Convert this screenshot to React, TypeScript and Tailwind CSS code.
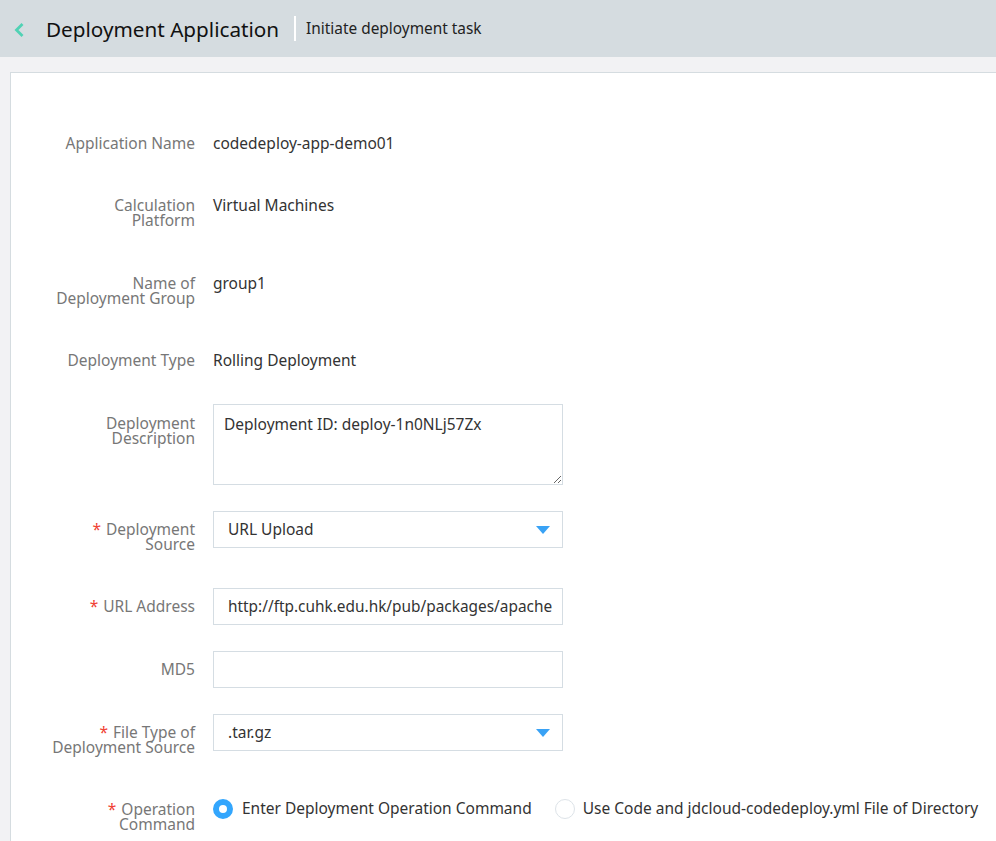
import React from "react";

const font = { fontFamily: '"Noto Sans", "Open Sans", sans-serif' };

function Label({ text, required }: { text: string[]; required?: boolean }) {
  return (
    <div className="w-[184px] shrink-0 text-right text-[15.5px] leading-[15px] text-[#777]">
      {text.map((t, i) => (
        <div key={i} className="h-[15px] whitespace-nowrap">
          {i === 0 && required ? <span className="mr-[5px] text-[#f04134]">*</span> : null}
          {t}
        </div>
      ))}
    </div>
  );
}

function Arrow() {
  return (
    <svg width="14" height="8" viewBox="0 0 14 8" className="absolute right-[12px] top-[14px]">
      <path d="M0 0 H14 L7 8 Z" fill="#39a2f5" />
    </svg>
  );
}

export default function App() {
  return (
    <div className="min-h-[841px] w-[996px] overflow-hidden bg-[#f2f2f4]" style={font}>
      <div className="flex h-[57px] items-center bg-[#d5dce0]">
        <svg width="12" height="16" viewBox="0 0 12 16" className="ml-[13px] mt-[2px]">
          <path d="M9.5 2 L3.5 8 L9.5 14" fill="none" stroke="#50d2b4" strokeWidth="2.8" />
        </svg>
        <div className="ml-[21px] text-[20.7px] leading-[30px] text-[#111]">Deployment Application</div>
        <div className="ml-[15px] h-[25px] w-[2px] bg-white" />
        <div className="ml-[10px] text-[15.4px] text-[#222]">Initiate deployment task</div>
      </div>
      <div className="ml-[10px] mt-[15px] min-h-[800px] border-l border-t border-[#d5dce0] bg-white pt-[63px]">
        <div className="flex h-[15px] gap-[18px]">
          <Label text={["Application Name"]} />
          <div className="text-[15.5px] leading-[15px] text-[#333]">codedeploy-app-demo01</div>
        </div>
        <div className="mt-[47px] flex h-[30px] gap-[18px]">
          <Label text={["Calculation", "Platform"]} />
          <div className="text-[15.5px] leading-[15px] text-[#333]">Virtual Machines</div>
        </div>
        <div className="mt-[48px] flex h-[30px] gap-[18px]">
          <Label text={["Name of", "Deployment Group"]} />
          <div className="text-[15.5px] leading-[15px] text-[#333]">group1</div>
        </div>
        <div className="mt-[47px] flex h-[15px] gap-[18px]">
          <Label text={["Deployment Type"]} />
          <div className="text-[15.5px] leading-[15px] text-[#333]">Rolling Deployment</div>
        </div>
        <div className="mt-[36px] flex h-[81px] gap-[18px]">
          <div className="pt-[12px]">
            <Label text={["Deployment", "Description"]} />
          </div>
          <textarea
            className="h-[81px] w-[350px] resize border border-[#d5dde3] px-[10px] py-[8px] text-[15.5px] leading-[22px] text-[#333] outline-none"
            style={font}
            defaultValue="Deployment ID: deploy-1n0NLj57Zx"
          />
        </div>
        <div className="mt-[26px] flex h-[37px] gap-[18px]">
          <div className="pt-[11px]">
            <Label text={["Deployment", "Source"]} required />
          </div>
          <div className="relative flex h-[37px] w-[350px] items-center border border-[#d5dde3] pl-[14px] text-[15.5px] text-[#333]">
            URL Upload
            <Arrow />
          </div>
        </div>
        <div className="mt-[40px] flex h-[37px] gap-[18px]">
          <div className="pt-[11px]">
            <Label text={["URL Address"]} required />
          </div>
          <div className="flex h-[37px] w-[350px] items-center overflow-hidden whitespace-nowrap border border-[#d5dde3] pl-[14px] text-[15.4px] text-[#333]">
            http://ftp.cuhk.edu.hk/pub/packages/apache
          </div>
        </div>
        <div className="mt-[26px] flex h-[37px] gap-[18px]">
          <div className="pt-[11px]">
            <Label text={["MD5"]} />
          </div>
          <div className="h-[37px] w-[350px] border border-[#d5dde3]" />
        </div>
        <div className="mt-[26px] flex h-[37px] gap-[18px]">
          <div className="pt-[11px]">
            <Label text={["File Type of", "Deployment Source"]} required />
          </div>
          <div className="relative flex h-[37px] w-[350px] items-center border border-[#d5dde3] pl-[14px] text-[15.5px] text-[#333]">
            .tar.gz
            <Arrow />
          </div>
        </div>
        <div className="mt-[48px] flex gap-[18px]">
          <div className="pt-[3px]">
            <Label text={["Operation", "Command"]} required />
          </div>
          <div className="flex h-[20px] items-center text-[15.5px] text-[#333]">
            <div className="flex items-center">
              <span className="box-border h-[20px] w-[20px] rounded-full border-[6px] border-[#33a6fd] bg-white" />
              <span className="ml-[9px] whitespace-nowrap">Enter Deployment Operation Command</span>
            </div>
            <div className="ml-[23px] flex items-center">
              <span className="box-border h-[20px] w-[20px] rounded-full border border-[#dde3e8] bg-white" />
              <span className="ml-[8px] whitespace-nowrap">Use Code and jdcloud-codedeploy.yml File of Directory</span>
            </div>
          </div>
        </div>
      </div>
    </div>
  );
}
